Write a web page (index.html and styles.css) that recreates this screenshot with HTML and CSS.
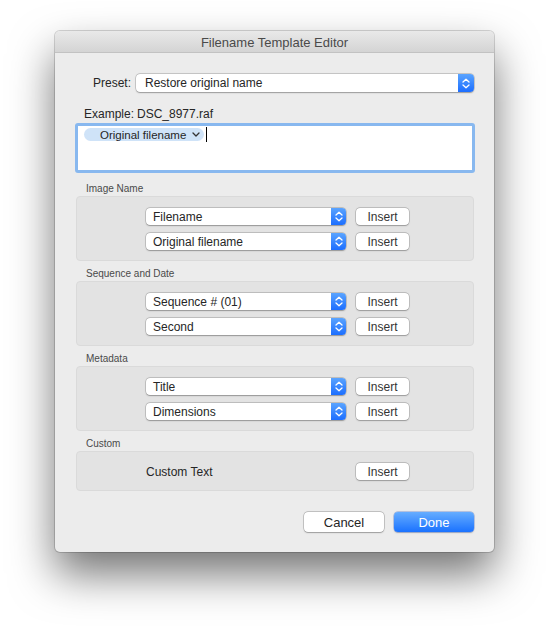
FILE: index.html
```html
<!DOCTYPE html>
<html>
<head>
<meta charset="utf-8">
<title>Filename Template Editor</title>
<link rel="stylesheet" href="styles.css">
</head>
<body>
<div class="window">
  <div class="titlebar">Filename Template Editor</div>
  <div class="content">
    <div class="preset-row">
      <span class="preset-label">Preset:</span>
      <div class="popup popup-wide">
        <span class="popup-text">Restore original name</span>
        <span class="stepper">
          <svg width="8" height="11" viewBox="0 0 8 11"><path d="M1 4 L4 1.2 L7 4 M1 7 L4 9.8 L7 7" fill="none" stroke="#fff" stroke-width="1.3" stroke-linecap="round" stroke-linejoin="round"/></svg>
        </span>
      </div>
    </div>
    <div class="example-row">
      <span class="example-label">Example:</span>
      <span class="example-value">DSC_8977.raf</span>
    </div>
    <div class="template-field">
      <span class="token"><span class="token-text">Original filename</span><svg class="token-chevron" width="8" height="5" viewBox="0 0 8 5"><path d="M1 1 L4 4 L7 1" fill="none" stroke="#333" stroke-width="1.3" stroke-linecap="round" stroke-linejoin="round"/></svg></span><span class="caret"></span>
    </div>

    <div class="section-label">Image Name</div>
    <div class="group">
      <div class="group-row">
        <div class="popup popup-field"><span class="popup-text">Filename</span><span class="stepper"><svg width="8" height="11" viewBox="0 0 8 11"><path d="M1 4 L4 1.2 L7 4 M1 7 L4 9.8 L7 7" fill="none" stroke="#fff" stroke-width="1.3" stroke-linecap="round" stroke-linejoin="round"/></svg></span></div>
        <button class="btn-insert">Insert</button>
      </div>
      <div class="group-row">
        <div class="popup popup-field"><span class="popup-text">Original filename</span><span class="stepper"><svg width="8" height="11" viewBox="0 0 8 11"><path d="M1 4 L4 1.2 L7 4 M1 7 L4 9.8 L7 7" fill="none" stroke="#fff" stroke-width="1.3" stroke-linecap="round" stroke-linejoin="round"/></svg></span></div>
        <button class="btn-insert">Insert</button>
      </div>
    </div>

    <div class="section-label">Sequence and Date</div>
    <div class="group">
      <div class="group-row">
        <div class="popup popup-field"><span class="popup-text">Sequence # (01)</span><span class="stepper"><svg width="8" height="11" viewBox="0 0 8 11"><path d="M1 4 L4 1.2 L7 4 M1 7 L4 9.8 L7 7" fill="none" stroke="#fff" stroke-width="1.3" stroke-linecap="round" stroke-linejoin="round"/></svg></span></div>
        <button class="btn-insert">Insert</button>
      </div>
      <div class="group-row">
        <div class="popup popup-field"><span class="popup-text">Second</span><span class="stepper"><svg width="8" height="11" viewBox="0 0 8 11"><path d="M1 4 L4 1.2 L7 4 M1 7 L4 9.8 L7 7" fill="none" stroke="#fff" stroke-width="1.3" stroke-linecap="round" stroke-linejoin="round"/></svg></span></div>
        <button class="btn-insert">Insert</button>
      </div>
    </div>

    <div class="section-label">Metadata</div>
    <div class="group">
      <div class="group-row">
        <div class="popup popup-field"><span class="popup-text">Title</span><span class="stepper"><svg width="8" height="11" viewBox="0 0 8 11"><path d="M1 4 L4 1.2 L7 4 M1 7 L4 9.8 L7 7" fill="none" stroke="#fff" stroke-width="1.3" stroke-linecap="round" stroke-linejoin="round"/></svg></span></div>
        <button class="btn-insert">Insert</button>
      </div>
      <div class="group-row">
        <div class="popup popup-field"><span class="popup-text">Dimensions</span><span class="stepper"><svg width="8" height="11" viewBox="0 0 8 11"><path d="M1 4 L4 1.2 L7 4 M1 7 L4 9.8 L7 7" fill="none" stroke="#fff" stroke-width="1.3" stroke-linecap="round" stroke-linejoin="round"/></svg></span></div>
        <button class="btn-insert">Insert</button>
      </div>
    </div>

    <div class="section-label">Custom</div>
    <div class="group">
      <div class="group-row">
        <span class="custom-text">Custom Text</span>
        <button class="btn-insert">Insert</button>
      </div>
    </div>

    <div class="footer">
      <button class="btn btn-cancel">Cancel</button>
      <button class="btn btn-done">Done</button>
    </div>
  </div>
</div>
</body>
</html>
```

FILE: styles.css
```css
html, body {
  margin: 0;
  padding: 0;
  background: #ffffff;
}
body {
  box-sizing: border-box;
  min-height: 632px;
  padding: 31px 0 80px 55px;
  font-family: "Liberation Sans", Arial, sans-serif;
  color: #262626;
}
.window {
  width: 439px;
  background: #ececec;
  border-radius: 5px;
  box-shadow: 0 0 0 1px rgba(0,0,0,0.16), 0 22px 44px rgba(0,0,0,0.55);
  overflow: hidden;
}
.titlebar {
  height: 22px;
  line-height: 23px;
  text-align: center;
  font-size: 13px;
  color: #4a4a4a;
  background: linear-gradient(#e9e9e9, #d4d4d4);
  border-bottom: 1px solid #c2c2c2;
  box-sizing: border-box;
}
.content {
  padding: 21px 20px 20px 20px;
}
.preset-row {
  display: flex;
  align-items: center;
  height: 18px;
}
.preset-label {
  width: 56px;
  text-align: right;
  font-size: 12px;
  margin-right: 5px;
}
.popup {
  display: flex;
  align-items: stretch;
  background: #fff;
  border-radius: 4px;
  box-shadow: 0 0 0 0.5px rgba(0,0,0,0.25), 0 0.5px 1.5px rgba(0,0,0,0.25);
  overflow: hidden;
  box-sizing: border-box;
}
.popup-wide {
  flex: 1;
  height: 18px;
}
.popup-text {
  flex: 1;
  font-size: 12px;
  line-height: 18px;
  padding-left: 9px;
  white-space: nowrap;
}
.stepper {
  width: 16px;
  display: flex;
  align-items: center;
  justify-content: center;
  background: linear-gradient(#5aa4ff, #1c6eff);
}
.example-row {
  display: flex;
  align-items: center;
  height: 14px;
  margin-top: 15px;
  font-size: 12px;
}
.example-label {
  padding-left: 9px;
  width: 53px;
}
.template-field {
  margin-top: 2px;
  height: 50px;
  width: 400px;
  box-sizing: border-box;
  background: #fff;
  border: 3px solid #88b8ef;
  border-radius: 3px;
  padding: 2px 0 0 6px;
  display: flex;
  align-items: flex-start;
}
.token {
  flex-shrink: 0;
  white-space: nowrap;
  display: flex;
  align-items: center;
  height: 13px;
  width: 120px;
  box-sizing: border-box;
  padding: 0 4px 0 16px;
  background: #cfe3f8;
  border-radius: 7px;
  font-size: 11.5px;
  color: #262626;
}
.token-text {
  flex: 1;
}
.token-chevron {
  flex-shrink: 0;
}
.caret {
  flex-shrink: 0;
  display: inline-block;
  width: 1px;
  height: 15px;
  background: #000;
  margin-left: 2px;
  margin-top: -1px;
}
.section-label {
  font-size: 10px;
  line-height: 14px;
  color: #4a4a4a;
  margin: 6px 0 0 11px;
}
.template-field + .section-label {
  margin-top: 9px;
}
.group {
  width: 398px;
  margin-left: 1px;
  box-sizing: border-box;
  background: #e3e3e3;
  border: 1px solid #dadada;
  border-radius: 4px;
  padding: 11px 0 10px 69px;
  display: flex;
  flex-direction: column;
  gap: 8px;
}
.group-row {
  display: flex;
  align-items: center;
  gap: 10px;
  height: 17px;
}
.popup-field {
  width: 200px;
  height: 17px;
}
.popup-field .popup-text {
  line-height: 18px;
  padding-left: 7px;
}
.popup-field .stepper {
  width: 15px;
}
.btn-insert {
  width: 53px;
  height: 17px;
  padding: 1px 0 0;
  font-family: inherit;
  font-size: 12px;
  color: #333;
  background: #fff;
  border: none;
  border-radius: 4px;
  box-shadow: 0 0 0 0.5px rgba(0,0,0,0.28), 0 0.5px 1.5px rgba(0,0,0,0.22);
}
.custom-text {
  width: 200px;
  font-size: 12px;
}
.footer {
  display: flex;
  justify-content: flex-end;
  gap: 10px;
  margin-top: 21px;
}
.btn {
  width: 80px;
  height: 20px;
  padding: 0;
  font-family: inherit;
  font-size: 13px;
  border: none;
  border-radius: 4px;
}
.btn-cancel {
  background: #fff;
  color: #262626;
  box-shadow: 0 0 0 0.5px rgba(0,0,0,0.3), 0 0.5px 1.5px rgba(0,0,0,0.22);
}
.btn-done {
  background: linear-gradient(#66adff, #1a72ff);
  color: #fff;
  box-shadow: 0 0 0 0.5px rgba(0,60,200,0.4), 0 0.5px 1.5px rgba(0,0,0,0.2);
}
```
